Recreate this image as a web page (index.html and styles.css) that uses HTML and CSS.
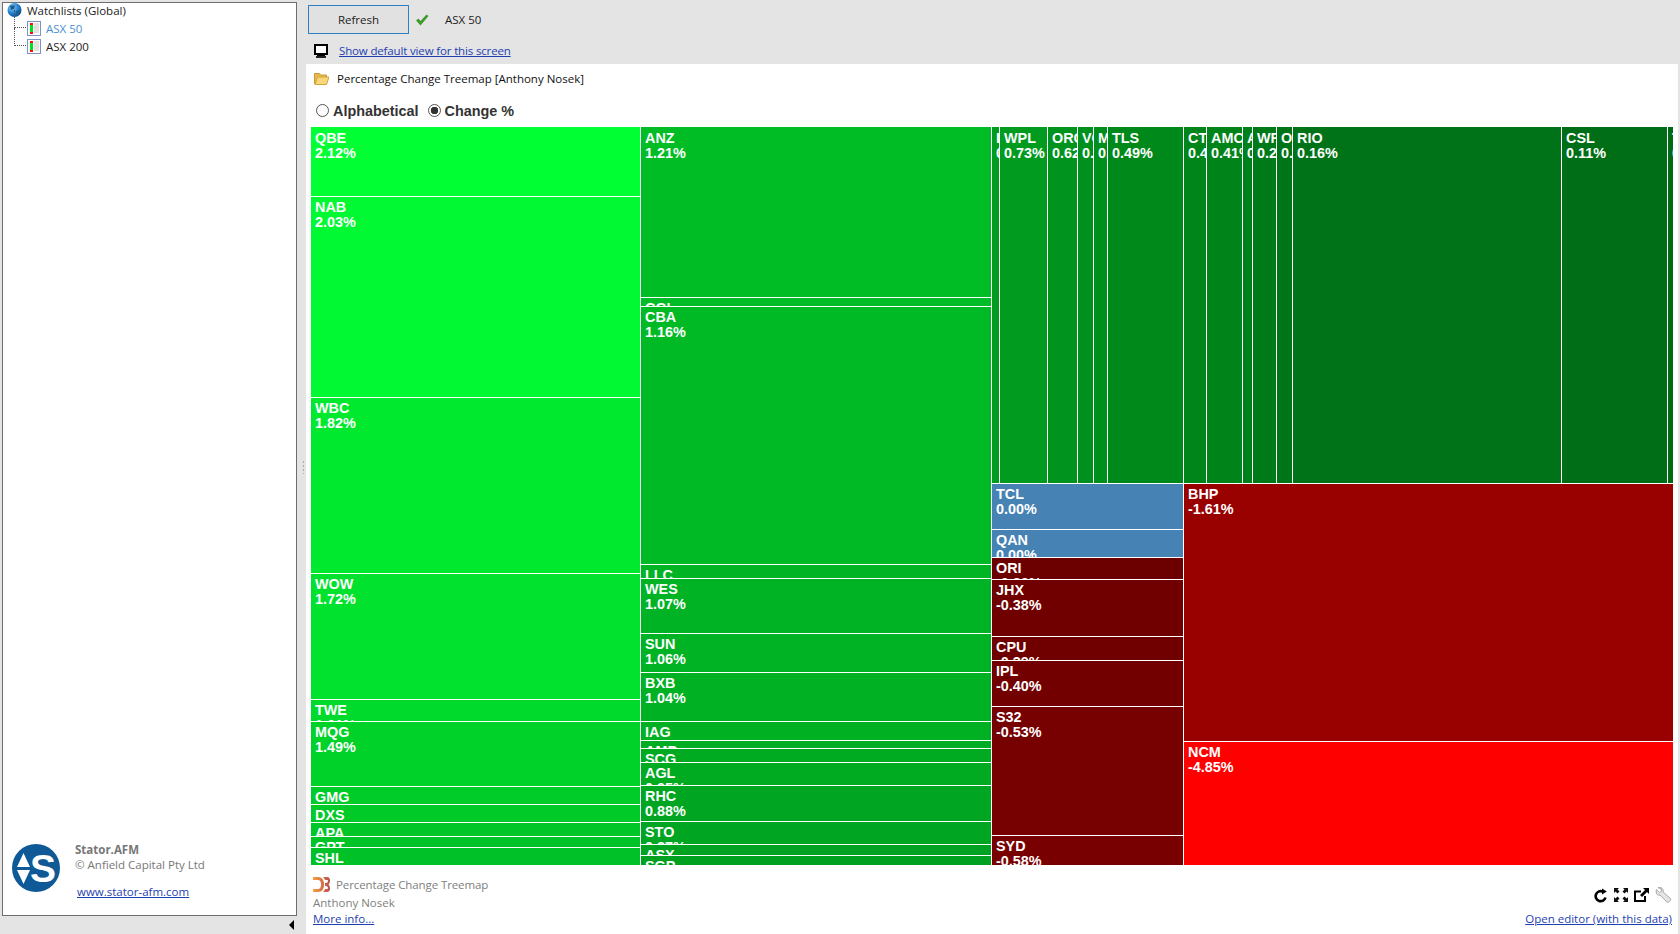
FILE: index.html
```html
<!DOCTYPE html>
<html lang="en">
<head>
    <meta charset="UTF-8">
    <title>Percentage Change Treemap</title>
    <link rel="stylesheet" href="styles.css">
</head>
<body>
<div class="app">
    <div class="side">
        <div class="panel">
            <div class="tree">
                <div class="tree-row">
                    <svg class="globe" width="15" height="16" viewBox="0 0 15 16">
                        <defs><radialGradient id="gl" cx="0.35" cy="0.3" r="0.8"><stop offset="0" stop-color="#8fd0f5"/><stop offset="0.55" stop-color="#1f7fd0"/><stop offset="1" stop-color="#0b3f80"/></radialGradient></defs>
                        <circle cx="7.5" cy="8" r="7" fill="url(#gl)"/>
                        <path d="M3 4c2-1 4-1 5 0l-1 3-3 1zM9 9l3-1 1 2-3 3z" fill="#1d5f8c"/>
                    </svg>
                    <span>Watchlists (Global)</span>
                </div>
                <div class="tree-row child">
                    <span class="branch"></span>
                    <svg class="list-icon" width="14" height="15" viewBox="0 0 14 15"><use href="#listicon"/></svg>
                    <span class="active">ASX 50</span>
                </div>
                <div class="tree-row child">
                    <span class="branch"></span>
                    <svg class="list-icon" width="14" height="15" viewBox="0 0 14 15"><use href="#listicon"/></svg>
                    <span>ASX 200</span>
                </div>
            </div>
            <div class="brand">
                <div class="brand-top">
                    <svg class="logo" width="48" height="48" viewBox="0 0 48 48">
                        <circle cx="24" cy="24" r="24" fill="#0f5a96"/>
                        <path d="M5 23 11.500 9 18 23zM5 26h13L11.500 40z" fill="#fff"/>
                        <text x="18" y="38" class="logo-s">S</text>
                    </svg>
                    <div class="brand-text">
                        <b>Stator.AFM</b>
                        <span>© Anfield Capital Pty Ltd</span>
                    </div>
                </div>
                <a class="link brand-link" href="#">www.stator-afm.com</a>
            </div>
        </div>
        <div class="side-foot"><span class="collapse"></span></div>
    </div>
    <div class="splitter"></div>
    <div class="main">
        <div class="toolbar">
            <button class="refresh">Refresh</button>
            <svg class="check" width="14" height="12" viewBox="0 0 14 12"><path d="M1 6.500 3.500 4.500 5.500 7 11.500 0.500 13.500 2 5.500 11.500z" fill="#3f9a2e"/></svg>
            <span class="toolbar-name">ASX 50</span>
        </div>
        <div class="default-view">
            <svg width="14" height="14" viewBox="0 0 14 14"><rect x="0" y="0" width="14" height="11" fill="#000"/><rect x="2" y="2" width="10" height="7" fill="#fff"/><rect x="3" y="11" width="8" height="1" fill="#000"/><rect x="2" y="12" width="10" height="2" fill="#222"/></svg>
            <a class="link default-link" href="#">Show default view for this screen</a>
        </div>
        <div class="content">
            <div class="content-head">
                <svg width="15" height="13" viewBox="0 0 15 13"><path d="M0.500 12V1.500h5l1 1.500h6v2" fill="#e5b94e" stroke="#c99a34"/><path d="M1 12.500 3.500 5H15l-2.500 7.500z" fill="#f7d67c" stroke="#d2a63e"/></svg>
                <span>Percentage Change Treemap [Anthony Nosek]</span>
            </div>
            <div class="sort-row">
                <label class="sort"><span class="radio"></span>Alphabetical</label>
                <label class="sort"><span class="radio on"></span>Change %</label>
            </div>

            <div class="treemap">
                <div class="col-a" style="width:329px">
                    <div class="cell" style="height:69px;background:#00ff33">QBE<br>2.12%</div>
                    <div class="cell" style="height:201px;background:#00f932">NAB<br>2.03%</div>
                    <div class="cell" style="height:176px;background:#00e92f">WBC<br>1.82%</div>
                    <div class="cell" style="height:126px;background:#00e22d">WOW<br>1.72%</div>
                    <div class="cell" style="height:22px;background:#00da2c">TWE<br>1.61%</div>
                    <div class="cell" style="height:65px;background:#00d22a">MQG<br>1.49%</div>
                    <div class="cell" style="height:18px;background:#00cc29">GMG<br>1.41%</div>
                    <div class="cell" style="height:18px;background:#00ca28">DXS<br>1.38%</div>
                    <div class="cell" style="height:14px;background:#00c628">APA<br>1.33%</div>
                    <div class="cell" style="height:11px;background:#00c427">GPT<br>1.30%</div>
                    <div class="cell" style="height:18px;background:#00c127">SHL<br>1.26%</div>
                </div>
                <div class="col-b" style="width:351px">
                    <div class="cell" style="height:170px;background:#00bd26">ANZ<br>1.21%</div>
                    <div class="cell" style="height:9px;background:#00bc26">CGL<br>1.19%</div>
                    <div class="cell" style="height:258px;background:#00ba25">CBA<br>1.16%</div>
                    <div class="cell" style="height:14px;background:#00b424">LLC<br>1.08%</div>
                    <div class="cell" style="height:55px;background:#00b324">WES<br>1.07%</div>
                    <div class="cell" style="height:39px;background:#00b324">SUN<br>1.06%</div>
                    <div class="cell" style="height:49px;background:#00b123">BXB<br>1.04%</div>
                    <div class="cell" style="height:19px;background:#00b023">IAG<br>1.02%</div>
                    <div class="cell" style="height:8px;background:#00ad23">AMP<br>0.98%</div>
                    <div class="cell" style="height:14px;background:#00ab22">SCG<br>0.96%</div>
                    <div class="cell" style="height:23px;background:#00ab22">AGL<br>0.95%</div>
                    <div class="cell" style="height:36px;background:#00a621">RHC<br>0.88%</div>
                    <div class="cell" style="height:23px;background:#00a521">STO<br>0.87%</div>
                    <div class="cell" style="height:11px;background:#00a321">ASX<br>0.85%</div>
                    <div class="cell" style="height:10px;background:#00a120">SGP<br>0.82%</div>
                </div>
                <div class="col-c">
                    <div class="top-row">
                        <div class="cell" style="width:8px;background:#009c1f">IPL<br>0.75%</div>
                        <div class="cell" style="width:48px;background:#009b1f">WPL<br>0.73%</div>
                        <div class="cell" style="width:30px;background:#00931d">ORG<br>0.62%</div>
                        <div class="cell" style="width:16px;background:#00901d">VCX<br>0.58%</div>
                        <div class="cell" style="width:14px;background:#008e1c">MGR<br>0.55%</div>
                        <div class="cell" style="width:76px;background:#00891b">TLS<br>0.49%</div>
                        <div class="cell" style="width:23px;background:#00851b">CTX<br>0.43%</div>
                        <div class="cell" style="width:36px;background:#00841a">AMC<br>0.41%</div>
                        <div class="cell" style="width:10px;background:#00801a">AIO<br>0.36%</div>
                        <div class="cell" style="width:24px;background:#007918">WFD<br>0.26%</div>
                        <div class="cell" style="width:16px;background:#007517">OSH<br>0.21%</div>
                        <div class="cell" style="width:269px;background:#007217">RIO<br>0.16%</div>
                        <div class="cell" style="width:106px;background:#006e16">CSL<br>0.11%</div>
                        <div class="cell" style="width:6px;background:#006a15">TTS<br>0.05%</div>
                    </div>
                    <div class="bottom-row">
                        <div class="bottom-col" style="width:192px">
                            <div class="cell" style="height:46px;background:#4682b4">TCL<br>0.00%</div>
                            <div class="cell" style="height:28px;background:#4682b4">QAN<br>0.00%</div>
                            <div class="cell" style="height:22px;background:#6c0000">ORI<br>-0.30%</div>
                            <div class="cell" style="height:57px;background:#700000">JHX<br>-0.38%</div>
                            <div class="cell" style="height:24px;background:#700000">CPU<br>-0.39%</div>
                            <div class="cell" style="height:46px;background:#720000">IPL<br>-0.40%</div>
                            <div class="cell" style="height:129px;background:#770000">S32<br>-0.53%</div>
                            <div class="cell" style="height:30px;background:#790000">SYD<br>-0.58%</div>
                        </div>
                        <div class="bottom-col" style="width:490px">
                            <div class="cell" style="height:258px;background:#990000">BHP<br>-1.61%</div>
                            <div class="cell" style="height:124px;background:#ff0000">NCM<br>-4.85%</div>
                        </div>
                    </div>
                </div>
            </div>

            <div class="foot">
                <div class="foot-left">
                    <div class="foot-title">
                        <svg width="17" height="15" viewBox="0 0 17 15">
                            <defs><linearGradient id="d3" x1="0" x2="1"><stop offset="0" stop-color="#f9a03c"/><stop offset="1" stop-color="#b84e51"/></linearGradient></defs>
                            <path d="M0 0h5c4 0 6 3 6 7.500S9 15 5 15H0v-3h5c2 0 3-2 3-4.500S7 3 5 3H0zM10 0h4c2 0 3 1.500 3 3.500 0 1.500-.5 3-1.500 4 1 1 1.500 2.500 1.500 4 0 2-1 3.500-3 3.500h-4c1-1 1.500-2 2-3h2c.5 0 1-.5 1-1 0-1-1-2-2-2h-1c0-1 0-2 0-3h1c1 0 2-1 2-2 0-.5-.5-1-1-1h-2c-.5-1-1-2-2-3z" fill="url(#d3)"/>
                        </svg>
                        <span>Percentage Change Treemap</span>
                    </div>
                    <div class="foot-author">Anthony Nosek</div>
                    <a class="link" href="#">More info...</a>
                </div>
                <div class="foot-right">
                    <div class="foot-icons">
                        <svg width="14" height="15" viewBox="0 0 14 15"><path d="M11.500 9.500A5 5 0 1 1 8.500 3.500" fill="none" stroke="#000" stroke-width="2.600"/><path d="M8 0.500 12.800 3.500 8 6.500z" fill="#000"/></svg>
                        <svg width="14" height="14" viewBox="0 0 14 14"><path d="M0 0h5L3.500 1.500 5.500 3.500 3.500 5.500 1.500 3.500 0 5zM14 0v5L12.500 3.500 10.500 5.500 8.500 3.500 10.500 1.500 9 0zM0 14V9l1.500 1.500 2-2 2 2-2 2L5 14zM14 14H9l1.500-1.500-2-2 2-2 2 2L14 9z" fill="#111"/></svg>
                        <svg width="15" height="14" viewBox="0 0 15 14"><path d="M7 3.500H1V13h10V8" fill="none" stroke="#000" stroke-width="2"/><path d="M9 0h6v6l-2-2-5 5-2-2 5-5z" fill="#000"/></svg>
                        <svg width="17" height="17" viewBox="0 0 17 17"><path d="M1.500 2.500 4.500 5.500 6.500 4.500 6 1.500 3 .8C6-.5 9 2 8 5L15.500 11.500C16.500 13 14 16 12 15L5 8C2 9 .5 6 1.500 2.500z" fill="#e4e4e4" stroke="#a8a8a8"/></svg>
                    </div>
                    <a class="link" href="#">Open editor (with this data)</a>
                </div>
            </div>
        </div>
    </div>
</div>

<svg class="defs" width="0" height="0">
    <symbol id="listicon" viewBox="0 0 14 15">
        <rect x="0.500" y="0.500" width="13" height="14" fill="#fff" stroke="#7f93c8"/>
        <rect x="3" y="2" width="3" height="2" fill="#ff0a14"/>
        <rect x="3" y="4" width="3" height="7" fill="#00e020"/>
        <rect x="3" y="11" width="3" height="2" fill="#ff0a14"/>
        <path d="M7 3h5M7 5h5M7 7h5M7 9h5M7 11h5" stroke="#c4c4c4"/>
    </symbol>
</svg>
</body>
</html>
```

FILE: styles.css
```css
* {
    box-sizing: border-box;
}

body {
    margin: 0;
    background-color: #e4e4e4;
    font-family: "Open Sans", "Noto Sans", sans-serif;
    font-size: 11.5px;
    color: #222;
}

.app {
    display: flex;
    height: 934px;
    overflow: hidden;
}

.defs {
    position: absolute;
}

.link {
    color: #1f3fb0;
    text-decoration: underline;
}

/* left side */
.side {
    width: 297px;
    padding: 2px 0 0 2px;
    display: flex;
    flex-direction: column;
}

.panel {
    height: 914px;
    background-color: #fff;
    border: 1px solid #6d6d6d;
    display: flex;
    flex-direction: column;
    justify-content: space-between;
}

.tree {
    margin-top: -2px;
    padding: 0 0 0 4px;
}

.tree-row {
    display: flex;
    align-items: center;
    height: 18px;
    white-space: nowrap;
}

.globe {
    margin-right: 5px;
}

.child {
    padding-left: 7px;
}

.branch {
    width: 12px;
    height: 18px;
    margin-top: -18px;
    margin-right: 1px;
    border-left: 1px dotted #555;
    border-bottom: 1px dotted #555;
    align-self: flex-start;
    position: relative;
    top: 9px;
}

.list-icon {
    margin-right: 5px;
}

.active {
    color: #4a90d0;
}

.brand {
    padding: 0 0 16px 9px;
    color: #777;
}

.brand-top {
    display: flex;
    gap: 15px;
}

.logo-s {
    font-family: "Liberation Sans", sans-serif;
    font-weight: bold;
    font-size: 39px;
    fill: #fff;
}

.brand-text {
    display: flex;
    flex-direction: column;
    line-height: 15px;
    margin-top: -2px;
}

.brand-link {
    display: block;
    margin: -8px 0 0 65px;
}

.side-foot {
    flex: 1;
    display: flex;
    justify-content: flex-end;
    align-items: center;
    padding-right: 3px;
}

.collapse {
    border-style: solid;
    border-width: 5px 5px 5px 0;
    border-color: transparent #000 transparent transparent;
}

.splitter {
    width: 9px;
    background-image: radial-gradient(#aaa 1px, transparent 1px);
    background-size: 3px 4px;
    background-repeat: repeat-y;
    background-position: 5px 0;
    background-clip: content-box;
    background-origin: content-box;
    padding: 460px 0 460px;
}

/* right side */
.main {
    flex: 1;
    padding-right: 2px;
    display: flex;
    flex-direction: column;
}

.toolbar {
    height: 40px;
    padding: 5px 0 6px 2px;
    display: flex;
    align-items: center;
}

.refresh {
    width: 101px;
    height: 29px;
    border: 1px solid #2f7fc4;
    background-color: #e1e1e1;
    font: inherit;
    color: #222;
}

.check {
    margin: 0 16px 0 6px;
}

.default-view {
    height: 24px;
    padding: 0 0 3px 8px;
    display: flex;
    align-items: center;
    gap: 11px;
}

.default-link {
    letter-spacing: -0.15px;
}

.content {
    flex: 1;
    background-color: #fff;
    display: flex;
    flex-direction: column;
}

.content-head {
    height: 28px;
    padding-left: 8px;
    display: flex;
    align-items: center;
    gap: 8px;
    color: #111;
}

.sort-row {
    height: 35px;
    padding: 3px 0 0 10px;
    display: flex;
    align-items: center;
    gap: 9px;
    font-family: "Liberation Sans", sans-serif;
    font-weight: bold;
    font-size: 14.4px;
    color: #333;
}

.sort {
    display: flex;
    align-items: center;
    gap: 4px;
}

.radio {
    width: 13px;
    height: 13px;
    border: 1px solid #555;
    border-radius: 50%;
    background-color: #fff;
    margin-top: -2px;
}

.radio.on {
    background: radial-gradient(#333 3.5px, #fff 4px);
}

/* treemap */
.treemap {
    margin-left: 5px;
    width: 1362px;
    height: 738px;
    display: flex;
    flex: none;
}

.cell {
    border-top: 1px solid #fff;
    border-left: 1px solid #fff;
    padding: 3px 0 0 4px;
    overflow: hidden;
    white-space: nowrap;
    color: #fff;
    font-family: "Liberation Sans", sans-serif;
    font-weight: bold;
    font-size: 14.4px;
    line-height: 15px;
}

.col-a .cell:first-child,
.col-b .cell:first-child,
.top-row .cell {
    border-top: 0;
    padding-top: 4px;
}

.col-a .cell {
    border-left: 0;
    padding-left: 4px;
}

.col-c {
    width: 682px;
}

.top-row {
    height: 356px;
    display: flex;
}

.bottom-row {
    height: 382px;
    display: flex;
}

/* footer */
.foot {
    flex: 1;
    padding: 10px 6px 0 7px;
    display: flex;
    justify-content: space-between;
    color: #808080;
}

.foot-left {
    display: flex;
    flex-direction: column;
}

.foot-title {
    display: flex;
    align-items: center;
    gap: 6px;
    height: 19px;
    letter-spacing: -0.1px;
}

.foot-author {
    line-height: 17px;
}

.foot-right {
    display: flex;
    flex-direction: column;
    align-items: flex-end;
}

.foot-icons {
    display: flex;
    align-items: center;
    gap: 6px;
    height: 20px;
    margin: 10px 0 6px;
}
```
